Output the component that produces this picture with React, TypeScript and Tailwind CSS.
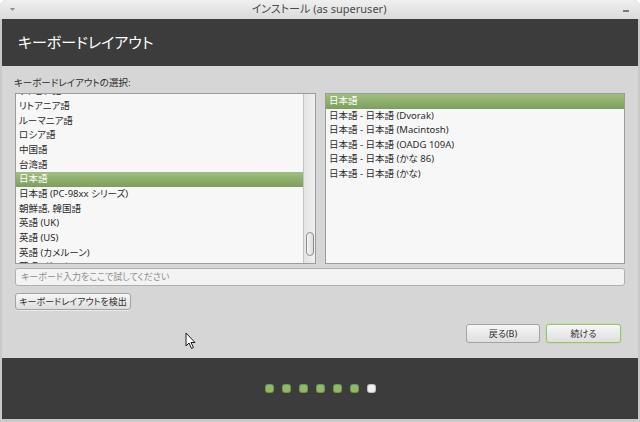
import React from 'react';

const leftItems = [
  'ラトビア語',
  'リトアニア語',
  'ルーマニア語',
  'ロシア語',
  '中国語',
  '台湾語',
  '日本語',
  '日本語 (PC-98xx シリーズ)',
  '朝鮮語, 韓国語',
  '英語 (UK)',
  '英語 (US)',
  '英語 (カメルーン)',
  '英語 (ガーナ)',
];

const rightItems = [
  '日本語',
  '日本語 - 日本語 (Dvorak)',
  '日本語 - 日本語 (Macintosh)',
  '日本語 - 日本語 (OADG 109A)',
  '日本語 - 日本語 (かな 86)',
  '日本語 - 日本語 (かな)',
];

function Row({ label, selected, tall }: { label: string; selected: boolean; tall?: boolean }) {
  return (
    <div
      className={
        (tall ? 'h-[14.7px] ' : 'h-[14.5px] ') +
        'flex items-center pl-[3px] whitespace-nowrap ' +
        (selected ? 'bg-gradient-to-b from-[#a0bf80] to-[#7d9e5c] text-white' : 'text-[#2b2b2b]')
      }
    >
      {label}
    </div>
  );
}

export default function App() {
  return (
    <div
      className="relative w-[640px] h-[422px] flex flex-col bg-[#c9c9c9] rounded-t-[6px] overflow-hidden text-[9.5px] [font-feature-settings:'palt']"
      style={{ fontFamily: '"Noto Sans", "Noto Sans CJK JP", sans-serif' }}
    >
      {/* title bar */}
      <div className="h-[19px] flex items-center justify-between px-[10px] bg-gradient-to-b from-[#f0f0f0] to-[#dadada] text-[#4a4a4a]">
        <svg width="5" height="3" viewBox="0 0 5 3" className="mt-[-1px]">
          <path d="M0 0 L5 0 L2.5 3 Z" fill="#8c8c8c" />
        </svg>
        <span className="text-[11px]">インストール (as superuser)</span>
        <span className="block w-[6px] h-[1.5px] bg-[#7a7a7a] mt-[3px] mr-[1px]" />
      </div>

      <div className="flex-1 flex flex-col px-[2px] pb-[3px]">
        {/* header band */}
        <div className="h-[47px] bg-[#3c3c3c] flex items-center pl-[16px] text-white text-[15px] pb-[1px]">
          キーボードレイアウト
        </div>

        {/* body */}
        <div className="flex-1 bg-[#d6d6d6] flex flex-col px-[13px] pt-[10px]">
          <div className="h-[13px] leading-[13px] text-[#2b2b2b] -ml-[1px]">キーボードレイアウトの選択:</div>
          <div className="mt-[4px] flex gap-[9px]">
            <div className="w-[301px] h-[171px] border border-[#9c9c9c] bg-[#f7f7f7] flex overflow-hidden">
              <div className="flex-1 overflow-hidden">
                <div className="-mt-[10px]">
                  {leftItems.map((it) => (
                    <Row key={it} label={it} selected={it === '日本語'} tall />
                  ))}
                </div>
              </div>
              <div className="w-[12px] border-l border-[#c4c4c4] bg-gradient-to-r from-[#e4e4e4] to-[#efefef] flex flex-col items-center pt-[138px]">
                <div className="w-[8px] h-[24px] rounded-full border border-[#8f8f8f] bg-gradient-to-r from-[#f4f4f4] to-[#dcdcdc]" />
              </div>
            </div>
            <div className="w-[300px] h-[171px] border border-[#9c9c9c] bg-[#f7f7f7] overflow-hidden">
              {rightItems.map((it, i) => (
                <Row key={it} label={it} selected={i === 0} />
              ))}
            </div>
          </div>

          <div className="mt-[4px] h-[18px] rounded-[3px] border border-[#b0b0b0] bg-[#f3f3f3] flex items-center pl-[5px] text-[#8c8c8c] text-[9px]">
            キーボード入力をここで試してください
          </div>

          <div className="mt-[7px]">
            <button className="w-[116px] h-[17px] rounded-[3px] border border-[#a3a3a3] bg-gradient-to-b from-[#f7f7f7] to-[#dedede] text-[#2e2e2e] text-[9px] flex items-center justify-center shadow-[0_1px_0_#ffffff80]">
              キーボードレイアウトを検出
            </button>
          </div>

          <div className="mt-[14px] flex justify-end gap-[6px] pr-[4px]">
            <button className="w-[74px] h-[19px] rounded-[3px] border border-[#a3a3a3] bg-gradient-to-b from-[#f7f7f7] to-[#dedede] text-[#2e2e2e] text-[9px] flex items-center justify-center">
              戻る(B)
            </button>
            <button className="w-[75px] h-[19px] rounded-[3px] border border-[#9cbf79] bg-gradient-to-b from-[#f7f7f7] to-[#dedede] text-[#2e2e2e] text-[9px] flex items-center justify-center shadow-[0_0_0_1px_#c4dcae]">
              続ける
            </button>
          </div>
        </div>

        {/* footer */}
        <div className="h-[61px] bg-[#3c3c3c] flex items-center justify-center gap-[10px]">
          {[0, 1, 2, 3, 4, 5].map((i) => (
            <span key={i} className="block w-[7px] h-[7px] rounded-[2px] bg-[#8fbb69] shadow-[0_0_0_1px_#6f9652]" />
          ))}
          <span className="block w-[7px] h-[7px] rounded-[2px] bg-[#f0f0f0] shadow-[0_0_0_1px_#bdbdbd]" />
        </div>
      </div>

      {/* mouse pointer */}
      <svg className="absolute left-[185px] top-[332px]" width="12" height="18" viewBox="0 0 12 18">
        <path d="M1 1 L1 14 L4 11 L6.5 16.5 L8.5 15.5 L6 10.5 L10 10.5 Z" fill="#ffffff" stroke="#1a1a1a" strokeWidth="1" strokeLinejoin="round" />
      </svg>
    </div>
  );
}
